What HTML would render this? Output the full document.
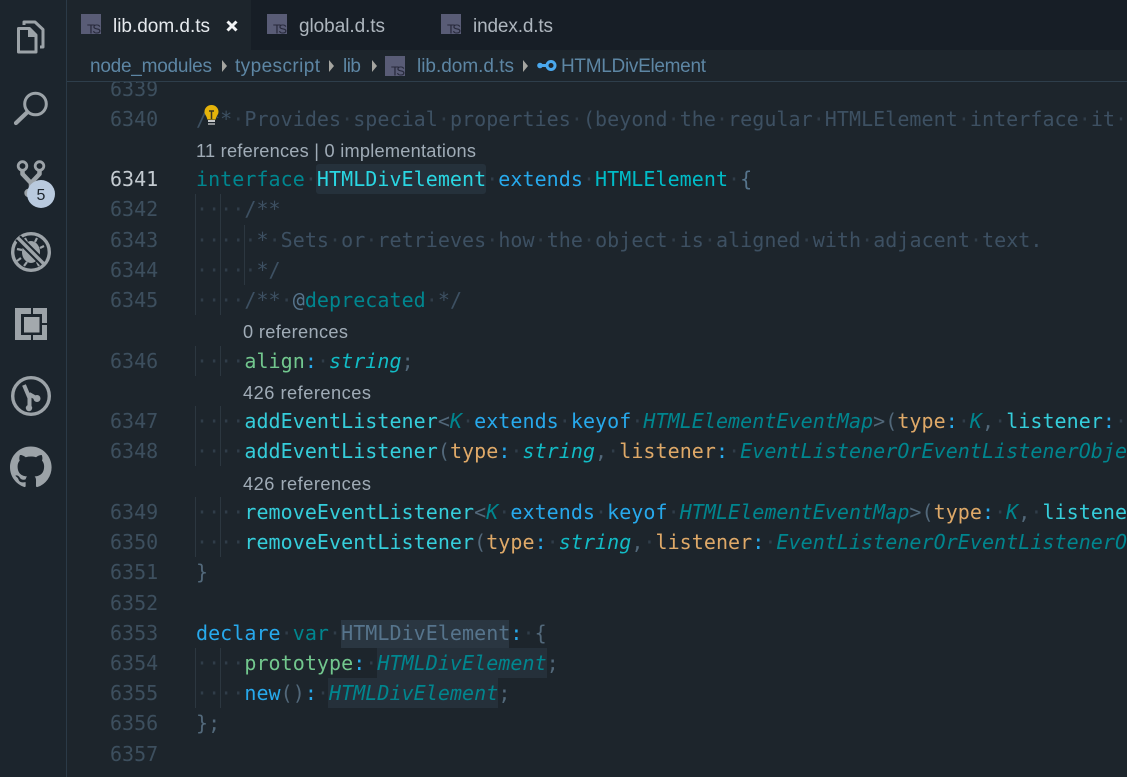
<!DOCTYPE html>
<html><head><meta charset="utf-8"><title>lib.dom.d.ts</title>
<style>
html,body{margin:0;padding:0;background:#1d252c;width:1127px;height:777px;overflow:hidden}
#ed{position:absolute;left:67px;top:82px;width:1060px;height:695px;overflow:hidden}
.l,.n{position:absolute;height:30px;line-height:30px;font-family:"DejaVu Sans Mono","Liberation Mono",monospace;font-size:20px;white-space:pre}
.l{left:129px;letter-spacing:.05px;color:#52687a}
.n{left:43px;color:#3d4f5e}
u{text-decoration:none;color:#303d49}
em{font-style:italic}
.c{color:#3d5062}.k{color:#00868f}.b{color:#27a9ec}.g{color:#72c78e}.s{color:#12bcc6}.m{color:#35cedb}.o{color:#dfa968}.h{color:#00bcc8}.p{color:#56748c}.w{color:#2ad6e2}
.hl{position:absolute;border-radius:3px}
.gd{position:absolute;width:1px;background:#2c3740}
svg{position:absolute;left:0;top:0}
</style></head><body>
<svg width="1127" height="777" style="z-index:5;pointer-events:none" font-family="'Liberation Sans',sans-serif">
<rect x="0" y="0" width="66" height="777" fill="#1c252d"/>
<rect x="66" y="0" width="1" height="777" fill="#2b3a47"/>
<rect x="67" y="0" width="1060" height="50" fill="#171e26"/>
<rect x="67" y="0" width="184" height="50" fill="#1d252c"/>
<rect x="67" y="50" width="1060" height="31" fill="#1d252c"/>
<rect x="67" y="81" width="1060" height="1" fill="#2e3e4b"/>
<g fill="none" stroke="#9ca3a8" stroke-width="3" stroke-linejoin="round">
<path d="M18.500 28.500h11l6.500 6.500v17H18.500z"/>
<path d="M28 28v9h8z" fill="#9ca3a8" stroke="none"/>
<path d="M24 25v-3h11l8 7.500V47h-3"/>
<circle cx="35.500" cy="104" r="10.800"/>
<path d="M27 112.500L16 123" stroke-width="4.200" stroke-linecap="round"/>
<circle cx="22.500" cy="166" r="4.300" stroke-width="2.800"/>
<circle cx="39.500" cy="166" r="4.300" stroke-width="2.800"/>
<path d="M22.500 171v3l8.500 9 8.500-9v-3M31 183v6" stroke-width="4.500"/>
<circle cx="31" cy="252" r="18.300" stroke-width="3.400"/>
<path d="M27 242l-2-4M35 242l2-4M40 248l4-2M22 250l-5-1M21 258l-4 3M27 262l-3 4M37 262l2 4" stroke-width="2.200"/>
<circle cx="31" cy="396" r="18.300" stroke-width="3.400"/>
<path d="M24 385L29.500 398V407M29 394L37 398.500" stroke-width="4"/>
</g>
<g fill="#9ca3a8">
<circle cx="28.500" cy="193" r="4.200"/>
<ellipse cx="31" cy="252" rx="9" ry="11"/>
<circle cx="37" cy="398.500" r="3.500"/><circle cx="29" cy="408" r="3.200"/>
<rect x="15" y="308" width="32" height="32"/>
</g>
<path d="M18 238l25 25" stroke="#1c252d" stroke-width="7.500" fill="none"/>
<path d="M17.500 237.500l26 26" stroke="#9ca3a8" stroke-width="3.400" fill="none"/>
<rect x="21" y="314" width="21" height="21" fill="#1c252d"/>
<rect x="24" y="317" width="15.500" height="15.500" fill="#a3a9ad"/>
<rect x="31" y="308" width="2" height="6" fill="#1c252d"/>
<rect x="31" y="335" width="2" height="5" fill="#1c252d"/>
<rect x="42" y="323" width="5" height="2" fill="#1c252d"/>
<g transform="translate(10 446.500) scale(2.6)" fill="#9ca3a8">
<path d="M8 0C3.58 0 0 3.58 0 8c0 3.54 2.29 6.53 5.47 7.59.4.07.55-.17.55-.38 0-.19-.01-.82-.01-1.49-2.01.37-2.53-.49-2.69-.94-.09-.23-.48-.94-.82-1.13-.28-.15-.68-.52-.01-.53.63-.01 1.08.58 1.23.82.72 1.21 1.87.87 2.33.66.07-.52.28-.87.51-1.07-1.78-.2-3.64-.89-3.64-3.95 0-.87.31-1.59.82-2.15-.08-.2-.36-1.02.08-2.12 0 0 .67-.21 2.2.82.64-.18 1.32-.27 2-.27.68 0 1.36.09 2 .27 1.53-1.04 2.2-.82 2.2-.82.44 1.1.16 1.92.08 2.12.51.56.82 1.27.82 2.15 0 3.07-1.87 3.75-3.65 3.95.29.25.54.73.54 1.48 0 1.07-.01 1.93-.01 2.2 0 .21.15.46.55.38A8.013 8.013 0 0016 8c0-4.42-3.58-8-8-8z"/>
</g>
<circle cx="41" cy="194" r="14" fill="#b9cade"/>
<text x="41" y="200" font-size="16" fill="#1d252c" text-anchor="middle">5</text>

<g fill="#595c76">
<rect x="81" y="14" width="20" height="20"/>
<rect x="267" y="14" width="20" height="20"/>
<rect x="441" y="14" width="20" height="20"/>
<rect x="385" y="56" width="20" height="20"/>
</g>
<g font-size="13" fill="#26283a">
<text x="87" y="33.500" textLength="14">TS</text>
<text x="273" y="33.500" textLength="14">TS</text>
<text x="447" y="33.500" textLength="14">TS</text>
<text x="391" y="75.500" textLength="14">TS</text>
</g>
<g font-size="19">
<text x="113" y="32" fill="#e6eaee" textLength="97">lib.dom.d.ts</text>
<text x="299" y="32" fill="#aeb6be" textLength="86">global.d.ts</text>
<text x="473" y="32" fill="#aeb6be" textLength="80">index.d.ts</text>
</g>
<path d="M227.500 21.500l9 9M236.500 21.500l-9 9" stroke="#f2f4f6" stroke-width="3"/>
<g font-size="19" fill="#5d86a4">
<text x="90" y="72" textLength="122">node_modules</text>
<text x="235" y="72" textLength="85">typescript</text>
<text x="343" y="72" textLength="18">lib</text>
<text x="417" y="72" textLength="97">lib.dom.d.ts</text>
<text x="561" y="72" textLength="145">HTMLDivElement</text>
</g>
<g fill="#a5a5a0">
<path d="M222 60l5 6-5 6z"/><path d="M329 60l5 6-5 6z"/><path d="M372 60l5 6-5 6z"/><path d="M523 60l5 6-5 6z"/>
</g>
<g>
<rect x="538" y="64" width="8" height="3" fill="#4aa8ee"/>
<circle cx="540" cy="65.500" r="2.800" fill="#4aa8ee"/>
<circle cx="551" cy="65.500" r="4" fill="none" stroke="#4aa8ee" stroke-width="3"/>
</g>
<g font-size="18.200" fill="#a0acb7">
<text x="196" y="157" textLength="280">11 references | 0 implementations</text>
<text x="243" y="338" textLength="105">0 references</text>
<text x="243" y="399" textLength="128">426 references</text>
<text x="243" y="490" textLength="128">426 references</text>
</g>
<path d="M211.500 105c-4 0-7 3-7 6.800 0 3 2.500 4.500 2.800 7.700h8.400c.3-3.200 2.800-4.700 2.800-7.700 0-3.800-3-6.800-7-6.800z" fill="#e5b30a"/>
<path d="M209 111h5M211.500 111v8" stroke="#3a3420" stroke-width="1.500" fill="none"/>
<rect x="208" y="120" width="7" height="2" fill="#c7c9cb"/><rect x="208" y="123" width="7" height="2" fill="#8c8f92"/>
</svg>

<div id="ed">
<div class="hl" style="left:249px;top:82px;width:170px;height:30px;background:#25313b"></div>
<div class="hl" style="left:274px;top:538px;width:168px;height:28px;background:#2a3641;border-radius:0"></div>
<div class="hl" style="left:310px;top:566px;width:170px;height:30px;background:#25303a;border-radius:0"></div>
<div class="hl" style="left:261px;top:596px;width:170px;height:30px;background:#25303a;border-radius:0"></div>

<div class="gd" style="left:128px;top:112px;height:121px"></div>
<div class="gd" style="left:153px;top:112px;height:121px"></div>
<div class="gd" style="left:177px;top:143px;height:60px"></div>
<div class="gd" style="left:128px;top:264px;height:30px"></div>
<div class="gd" style="left:153px;top:264px;height:30px"></div>
<div class="gd" style="left:128px;top:324px;height:60px"></div>
<div class="gd" style="left:153px;top:324px;height:60px"></div>
<div class="gd" style="left:128px;top:415px;height:60px"></div>
<div class="gd" style="left:153px;top:415px;height:60px"></div>
<div class="gd" style="left:128px;top:566px;height:60px"></div>
<div class="gd" style="left:153px;top:566px;height:60px"></div>

<div class="n" style="top:-8px">6339</div>
<div class="n" style="top:22px">6340</div>
<div class="n" style="top:82px;color:#c4cbd1">6341</div>
<div class="n" style="top:112px">6342</div>
<div class="n" style="top:143px">6343</div>
<div class="n" style="top:173px">6344</div>
<div class="n" style="top:203px">6345</div>
<div class="n" style="top:264px">6346</div>
<div class="n" style="top:324px">6347</div>
<div class="n" style="top:354px">6348</div>
<div class="n" style="top:415px">6349</div>
<div class="n" style="top:445px">6350</div>
<div class="n" style="top:475px">6351</div>
<div class="n" style="top:506px">6352</div>
<div class="n" style="top:536px">6353</div>
<div class="n" style="top:566px">6354</div>
<div class="n" style="top:596px">6355</div>
<div class="n" style="top:626px">6356</div>
<div class="n" style="top:657px">6357</div>

<div class="l c" style="top:22px">/**<u>·</u>Provides<u>·</u>special<u>·</u>properties<u>·</u>(beyond<u>·</u>the<u>·</u>regular<u>·</u>HTMLElement<u>·</u>interface<u>·</u>it<u>·</u>has</div>
<div class="l" style="top:82px"><span class="k">interface</span><u>·</u><span class="w">HTMLDivElement</span><u>·</u><span class="b">extends</span><u>·</u><span class="h">HTMLElement</span><u>·</u><span class="p">{</span></div>
<div class="l c" style="top:112px"><u>····</u>/**</div>
<div class="l c" style="top:143px"><u>·····</u>*<u>·</u>Sets<u>·</u>or<u>·</u>retrieves<u>·</u>how<u>·</u>the<u>·</u>object<u>·</u>is<u>·</u>aligned<u>·</u>with<u>·</u>adjacent<u>·</u>text.</div>
<div class="l c" style="top:173px"><u>·····</u>*/</div>
<div class="l c" style="top:203px"><u>····</u>/**<u>·</u><span class="p">@</span><span class="k">deprecated</span><u>·</u>*/</div>
<div class="l" style="top:264px"><u>····</u><span class="g">align</span><span class="b">:</span><u>·</u><em class="s">string</em>;</div>
<div class="l" style="top:324px"><u>····</u><span class="m">addEventListener</span>&lt;<em class="k">K</em><u>·</u><span class="b">extends</span><u>·</u><span class="b">keyof</span><u>·</u><em class="k">HTMLElementEventMap</em>&gt;(<span class="o">type</span><span class="b">:</span><u>·</u><em class="k">K</em>,<u>·</u><span class="m">listener</span><span class="b">:</span><u>·</u></div>
<div class="l" style="top:354px"><u>····</u><span class="m">addEventListener</span>(<span class="o">type</span><span class="b">:</span><u>·</u><em class="s">string</em>,<u>·</u><span class="o">listener</span><span class="b">:</span><u>·</u><em class="k">EventListenerOrEventListenerObject</em></div>
<div class="l" style="top:415px"><u>····</u><span class="m">removeEventListener</span>&lt;<em class="k">K</em><u>·</u><span class="b">extends</span><u>·</u><span class="b">keyof</span><u>·</u><em class="k">HTMLElementEventMap</em>&gt;(<span class="o">type</span><span class="b">:</span><u>·</u><em class="k">K</em>,<u>·</u><span class="m">listener</span></div>
<div class="l" style="top:445px"><u>····</u><span class="m">removeEventListener</span>(<span class="o">type</span><span class="b">:</span><u>·</u><em class="s">string</em>,<u>·</u><span class="o">listener</span><span class="b">:</span><u>·</u><em class="k">EventListenerOrEventListenerObject</em></div>
<div class="l" style="top:475px">}</div>
<div class="l" style="top:536px"><span class="b">declare</span><u>·</u><span class="k">var</span><u>·</u><span class="p">HTMLDivElement</span><span class="b">:</span><u>·</u>{</div>
<div class="l" style="top:566px"><u>····</u><span class="g">prototype</span><span class="b">:</span><u>·</u><em class="k">HTMLDivElement</em>;</div>
<div class="l" style="top:596px"><u>····</u><span class="b">new</span>()<span class="b">:</span><u>·</u><em class="k">HTMLDivElement</em>;</div>
<div class="l" style="top:626px">};</div>
<div class="l c" style="top:689px">/** Contains the content of the document and its elements</div>
</div>
</body></html>
